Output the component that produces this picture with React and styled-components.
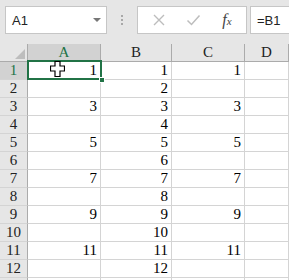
import React from "react";
import styled, { createGlobalStyle } from "styled-components";

const GlobalStyle = createGlobalStyle`
  html, body {
    margin: 0;
    padding: 0;
    background: #ffffff;
    overflow: hidden;
  }
  * { box-sizing: border-box; }
`;

const COLS = ["A", "B", "C", "D"];
const COL_WIDTHS = [73, 71, 73];
const ROWS = Array.from({ length: 13 }, (_, i) => i + 1);

const cellValue = (col, row) => {
  if (col === "B" && row <= 12) return row;
  if ((col === "A" || col === "C") && row % 2 === 1 && row <= 11) return row;
  return "";
};

function App() {
  return (
    <>
      <GlobalStyle />
      <Window>
        <Toolbar>
          <NameBox>
            <NameText>A1</NameText>
            <DropArrow />
          </NameBox>
          <Dots>
            <span />
            <span />
            <span />
          </Dots>
          <FxBox>
            <IconSlot>
              <svg width="14" height="14" viewBox="0 0 14 14">
                <path d="M2 2 L12 12 M12 2 L2 12" stroke="#bdbdbd" strokeWidth="1.4" />
              </svg>
            </IconSlot>
            <IconSlot>
              <svg width="15" height="14" viewBox="0 0 15 14">
                <path d="M1.5 7.5 L5.5 11.5 L13.5 2.5" stroke="#bdbdbd" strokeWidth="1.5" fill="none" />
              </svg>
            </IconSlot>
            <IconSlot>
              <FxText>f<sub>x</sub></FxText>
            </IconSlot>
          </FxBox>
          <FormulaInput>=B1</FormulaInput>
        </Toolbar>

        <Sheet>
          <Grid>
            <Corner>
              <svg width="10" height="10" viewBox="0 0 10 10">
                <polygon points="10,0 10,10 0,10" fill="#bdbdbd" />
              </svg>
            </Corner>
            {COLS.map((c, i) => (
              <ColHeader key={c} $active={i === 0}>{c}</ColHeader>
            ))}
            {ROWS.map((r) => (
              <React.Fragment key={r}>
                <RowHeader $active={r === 1}>{r <= 12 ? r : ""}</RowHeader>
                {COLS.map((c) => (
                  <Cell key={c}>{cellValue(c, r)}</Cell>
                ))}
              </React.Fragment>
            ))}
          </Grid>
          <Selection>
            <FillHandle />
          </Selection>
          <Cursor>
            <svg width="15" height="16" viewBox="0 0 15 16">
              <path
                d="M5 0.5 H10 V5 H14.5 V10 H10 V15.5 H5 V10 H0.5 V5 H5 Z"
                fill="#ffffff"
                stroke="#000000"
                strokeWidth="1.2"
              />
            </svg>
          </Cursor>
        </Sheet>
      </Window>
    </>
  );
}

export default App;

const Window = styled.div`
  width: 289px;
  height: 280px;
  overflow: hidden;
  display: flex;
  flex-direction: column;
  background: #ffffff;
`;

const Toolbar = styled.div`
  height: 44px;
  background: #e6e6e6;
  display: flex;
  align-items: flex-start;
  padding: 6px 0 0 5px;
  flex-shrink: 0;
`;

const NameBox = styled.div`
  width: 102px;
  height: 28px;
  background: #ffffff;
  border: 1px solid #c6c6c6;
  display: flex;
  align-items: center;
  justify-content: space-between;
  padding: 0 5px 0 6px;
`;

const NameText = styled.span`
  font-family: "Liberation Sans", Arial, sans-serif;
  font-size: 13px;
  color: #222;
`;

const DropArrow = styled.span`
  width: 0;
  height: 0;
  border-left: 4px solid transparent;
  border-right: 4px solid transparent;
  border-top: 4px solid #777;
`;

const Dots = styled.div`
  width: 30px;
  height: 28px;
  display: flex;
  flex-direction: column;
  align-items: center;
  justify-content: center;
  gap: 2px;

  span {
    width: 2px;
    height: 2px;
    background: #a8a8a8;
  }
`;

const FxBox = styled.div`
  width: 110px;
  height: 28px;
  background: #ffffff;
  border: 1px solid #c6c6c6;
  display: flex;
  align-items: center;
  justify-content: space-around;
  padding: 0 2px 0 4px;
`;

const IconSlot = styled.div`
  width: 30px;
  display: flex;
  align-items: center;
  justify-content: center;
`;

const FxText = styled.span`
  font-family: "Liberation Serif", "Times New Roman", serif;
  font-style: italic;
  font-size: 16px;
  color: #444;

  sub {
    font-size: 11px;
    vertical-align: baseline;
  }
`;

const FormulaInput = styled.div`
  margin-left: 3px;
  flex: 1;
  height: 28px;
  background: #ffffff;
  border: 1px solid #c6c6c6;
  border-right: none;
  display: flex;
  align-items: center;
  padding-left: 6px;
  font-family: "Liberation Sans", Arial, sans-serif;
  font-size: 13px;
  color: #222;
`;

const Sheet = styled.div`
  position: relative;
  flex: 1;
  overflow: hidden;
`;

const Grid = styled.div`
  display: grid;
  grid-template-columns: 28px ${COL_WIDTHS.map((w) => `${w}px`).join(" ")} 1fr;
  grid-template-rows: 18px;
  grid-auto-rows: 18px;
  font-family: "Liberation Serif", "Times New Roman", serif;
  font-size: 15px;
  color: #000;
`;

const Corner = styled.div`
  background: #e6e6e6;
  border-right: 1px solid #ababab;
  border-bottom: 1px solid #ababab;
  display: flex;
  align-items: flex-end;
  justify-content: flex-end;
  padding: 0 2px 2px 0;
`;

const ColHeader = styled.div`
  background: ${(p) => (p.$active ? "#d2d2d2" : "#e6e6e6")};
  color: ${(p) => (p.$active ? "#217346" : "#222")};
  border-right: 1px solid #ababab;
  border-bottom: 1px solid #ababab;
  display: flex;
  align-items: center;
  justify-content: center;
  line-height: 1;
`;

const RowHeader = styled.div`
  background: ${(p) => (p.$active ? "#d2d2d2" : "#e6e6e6")};
  color: ${(p) => (p.$active ? "#217346" : "#222")};
  border-right: 1px solid #ababab;
  border-bottom: 1px solid #d4d4d4;
  display: flex;
  align-items: center;
  justify-content: center;
  line-height: 1;
`;

const Cell = styled.div`
  border-right: 1px solid #d4d4d4;
  border-bottom: 1px solid #d4d4d4;
  display: flex;
  align-items: center;
  justify-content: flex-end;
  padding-right: 3px;
  line-height: 1;
`;

const Selection = styled.div`
  position: absolute;
  left: 27px;
  top: 16px;
  width: 75px;
  height: 20px;
  border: 2px solid #217346;
`;

const FillHandle = styled.div`
  position: absolute;
  right: -5px;
  bottom: -5px;
  width: 6px;
  height: 6px;
  background: #217346;
  border: 1px solid #ffffff;
`;

const Cursor = styled.div`
  position: absolute;
  left: 50px;
  top: 17px;
  line-height: 0;
`;
